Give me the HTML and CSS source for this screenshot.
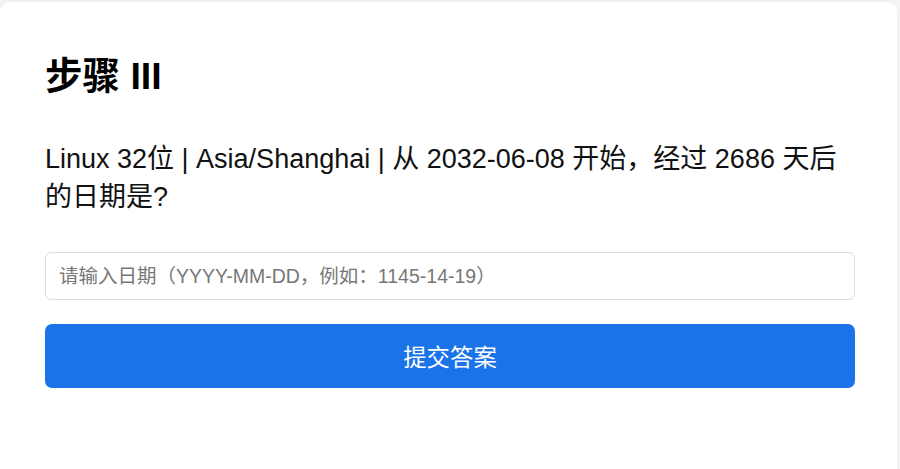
FILE: index.html
```html
<!DOCTYPE html>
<html lang="zh-CN">
<head>
<meta charset="utf-8">
<title>步骤 III</title>
<link rel="stylesheet" href="styles.css">
</head>
<body>
<main class="card">
  <h1 class="title">步骤 III</h1>
  <p class="question">Linux 32位 | Asia/Shanghai | 从 2032-06-08 开始，经过 2686 天后的日期是?</p>
  <form class="answer-form" onsubmit="return false;">
    <input class="date-input" type="text" placeholder="请输入日期（YYYY-MM-DD，例如：1145-14-19）">
    <button class="submit-btn" type="submit">提交答案</button>
  </form>
</main>
</body>
</html>
```

FILE: styles.css
```css
html, body {
  margin: 0;
  padding: 0;
  background: #f4f4f4;
  height: 100%;
  overflow: hidden;
}

body {
  font-family: "Liberation Sans", Arial, "Noto Sans CJK SC", sans-serif;
  color: #111;
}

.card {
  background: #fff;
  margin: 2px 3px 0 0;
  border-radius: 10px;
  box-shadow: 0 0 3px rgba(0, 0, 0, 0.04);
  padding: 52px 42px 0 45px;
  height: 520px;
  box-sizing: border-box;
}

.title {
  margin: 0;
  font-size: 37.5px;
  line-height: 44px;
  font-weight: 700;
  color: #000;
}

.question {
  margin: 42px 0 0;
  font-size: 27px;
  line-height: 38px;
  color: #111;
}

.answer-form {
  display: flex;
  flex-direction: column;
  gap: 24px;
  margin-top: 36px;
}

.date-input {
  box-sizing: border-box;
  height: 48px;
  width: 100%;
  border: 1px solid #dcdcdc;
  border-radius: 6px;
  padding: 0 13px;
  font-family: inherit;
  font-size: 19.5px;
  color: #222;
  background: #fff;
  outline: none;
}

.date-input::placeholder {
  color: #777;
}

.submit-btn {
  height: 64px;
  width: 100%;
  border: none;
  border-radius: 7px;
  background: #1a73e8;
  color: #fff;
  font-family: inherit;
  font-size: 23.4px;
  cursor: pointer;
}
```
